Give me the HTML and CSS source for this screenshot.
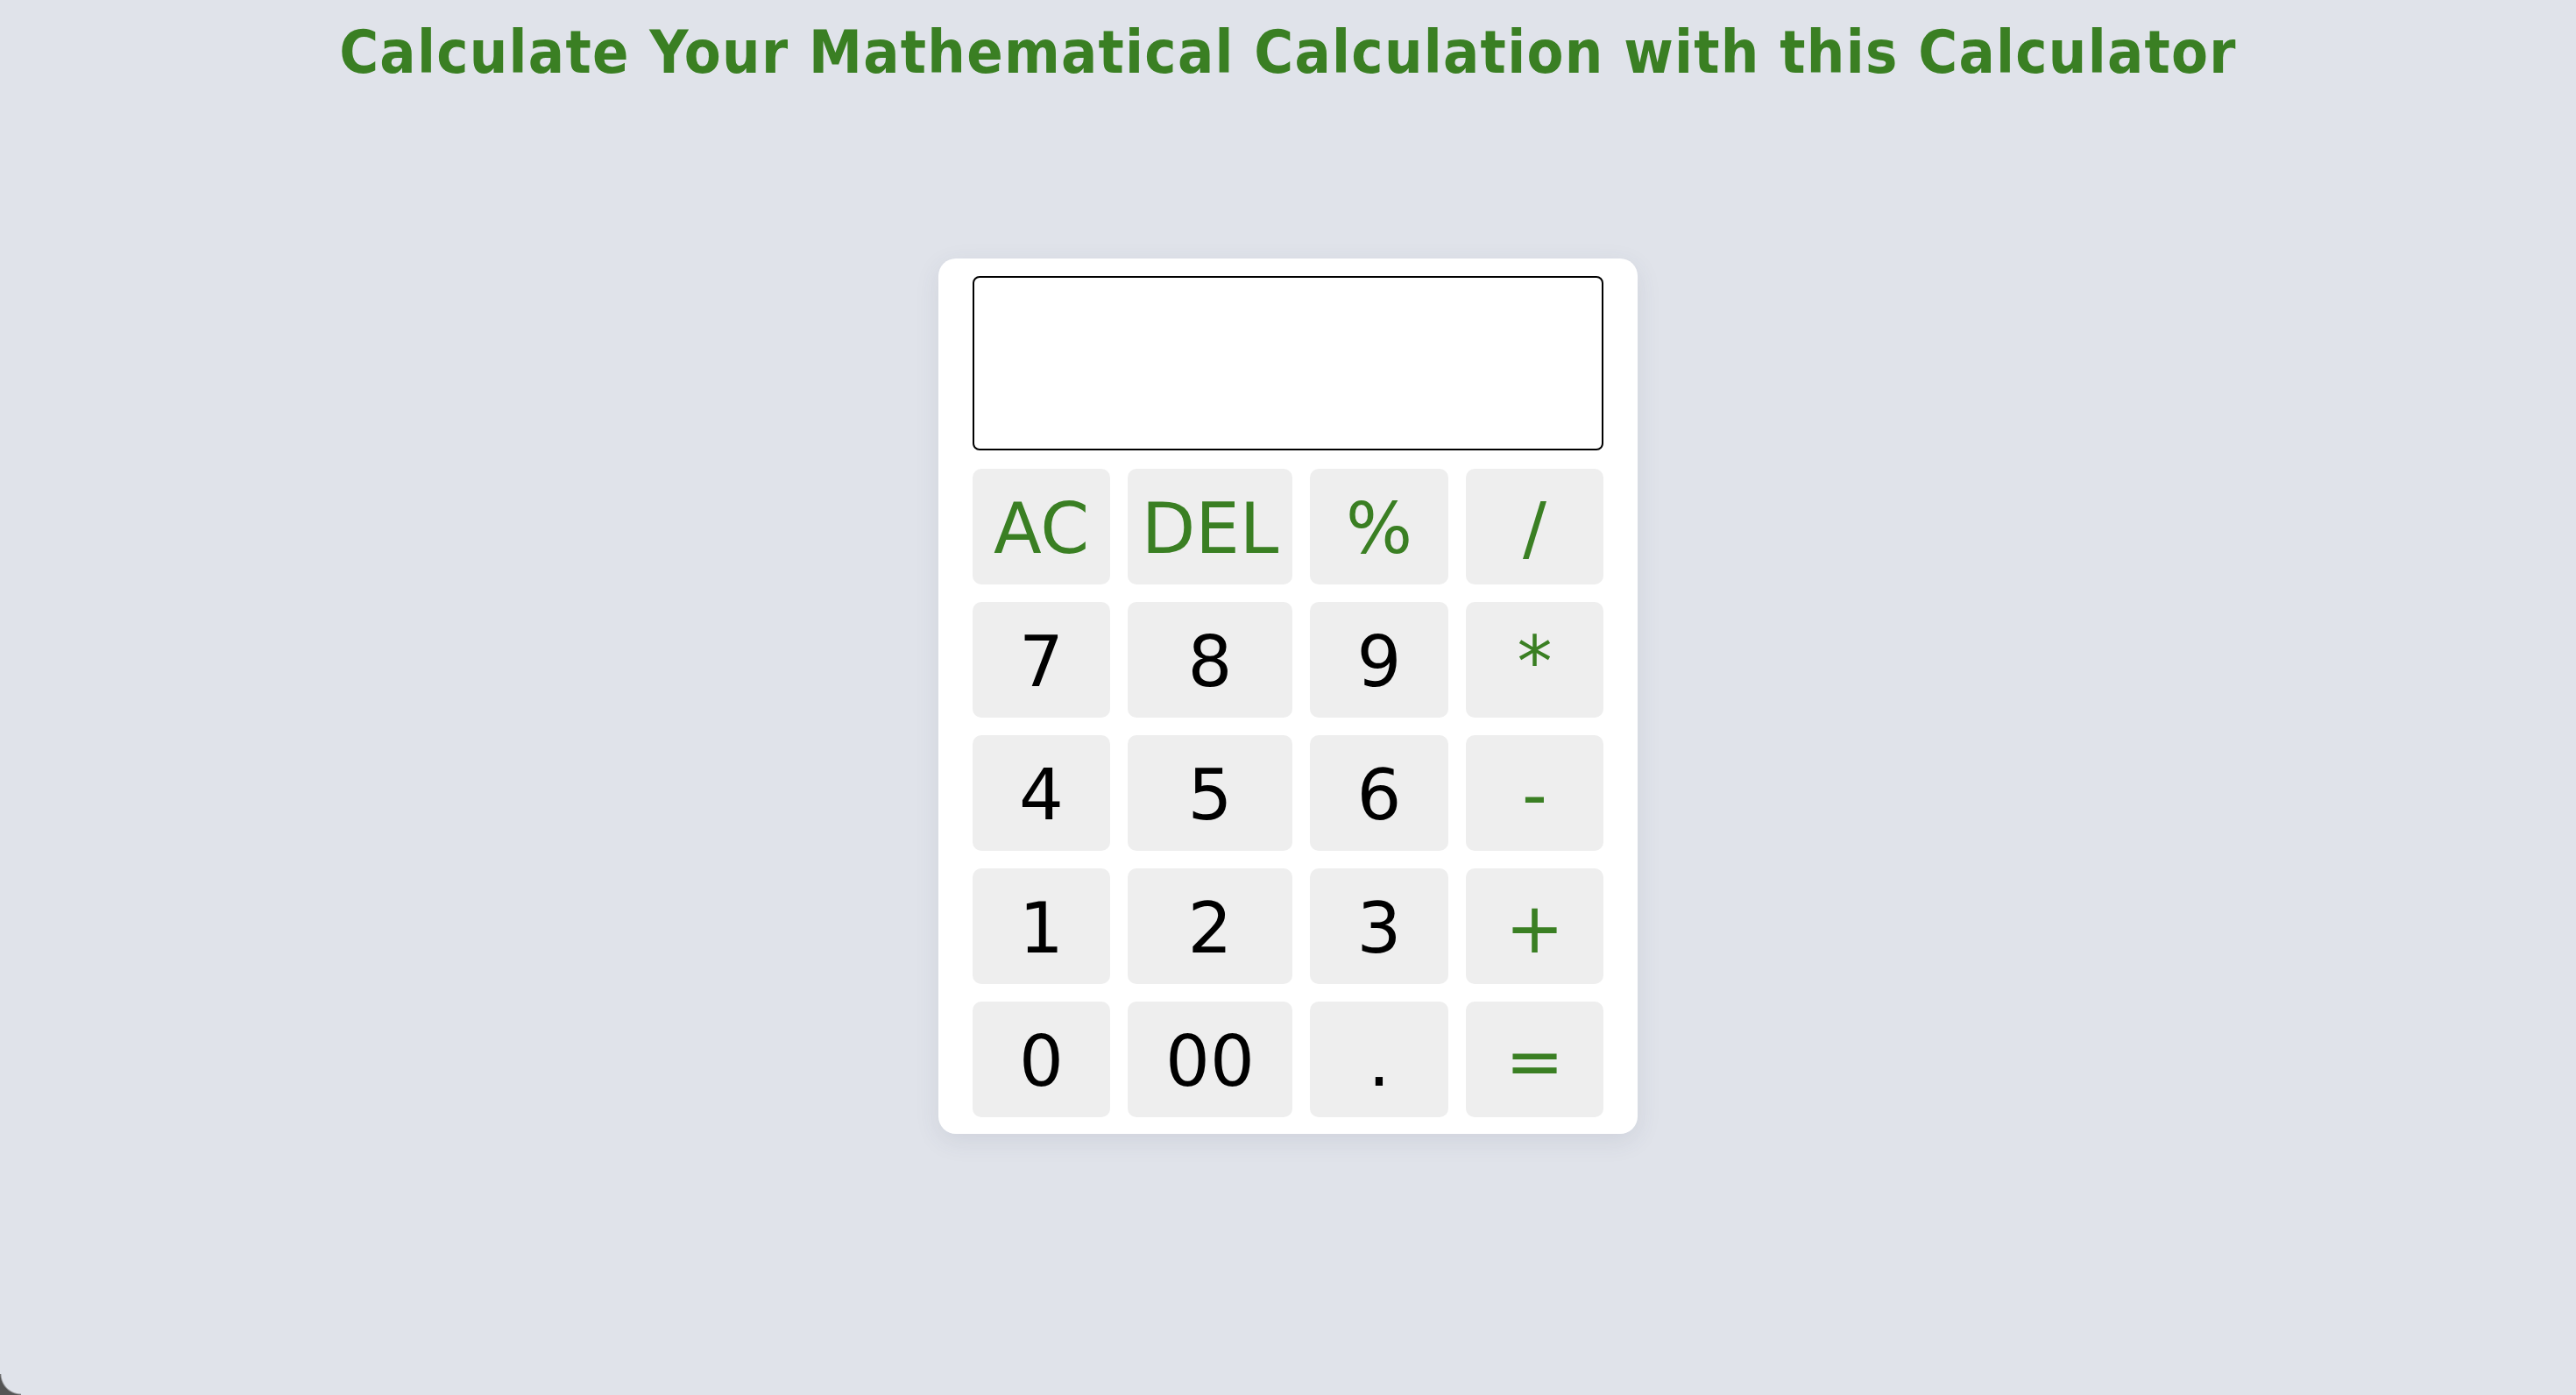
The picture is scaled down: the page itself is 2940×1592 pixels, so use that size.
FILE: index.html
```html
<!DOCTYPE html>
<html lang="en">
<head>
<meta charset="utf-8">
<title>Calculator</title>
<link rel="stylesheet" href="styles.css">
</head>
<body>
<h1 class="title">Calculate Your Mathematical Calculation with this Calculator</h1>
<div class="calculator">
  <input class="display" type="text" value="">
  <div class="keys">
    <button class="key op">AC</button>
    <button class="key op">DEL</button>
    <button class="key op">%</button>
    <button class="key op">/</button>
    <button class="key">7</button>
    <button class="key">8</button>
    <button class="key">9</button>
    <button class="key op">*</button>
    <button class="key">4</button>
    <button class="key">5</button>
    <button class="key">6</button>
    <button class="key op">-</button>
    <button class="key">1</button>
    <button class="key">2</button>
    <button class="key">3</button>
    <button class="key op">+</button>
    <button class="key">0</button>
    <button class="key">00</button>
    <button class="key">.</button>
    <button class="key op">=</button>
  </div>
</div>
<div class="corner"></div>
</body>
</html>
```
FILE: styles.css
```css
html, body {
  margin: 0;
  padding: 0;
}
body {
  background: #e0e3ea;
  min-height: 1592px;
  display: flex;
  flex-direction: column;
  align-items: center;
  font-family: "DejaVu Sans", Verdana, sans-serif;
}
.title {
  margin: 20px 0 0;
  font-family: "DejaVu Sans Condensed", "DejaVu Sans", sans-serif;
  font-stretch: condensed;
  font-size: 68px;
  font-weight: bold;
  letter-spacing: 1.3px;
  line-height: normal;
  color: #3a7f23;
  text-align: center;
  white-space: nowrap;
}
.calculator {
  margin-top: 196px;
  width: 798px;
  box-sizing: border-box;
  padding: 20px 39px 19px;
  background: #fff;
  border-radius: 20px;
  box-shadow: 0 8px 28px rgba(60, 70, 100, 0.10);
}
.display {
  display: block;
  box-sizing: border-box;
  width: 720px;
  height: 199px;
  margin: 0 0 21px;
  border: 2px solid #000;
  border-radius: 8px;
  background: #fff;
  outline: none;
  font-family: "DejaVu Sans", Verdana, sans-serif;
  font-size: 60px;
  text-align: right;
  padding: 0 20px;
}
.keys {
  display: grid;
  grid-template-columns: 157px 188px 158px 157px;
  grid-auto-rows: 132px;
  gap: 20px;
}
.key {
  margin: 0;
  padding: 6px 0 0;
  border: none;
  border-radius: 10px;
  background: #eeeeee;
  font-family: "DejaVu Sans", Verdana, sans-serif;
  font-size: 80px;
  line-height: 1;
  color: #000;
  display: flex;
  align-items: center;
  justify-content: center;
}
.key.op {
  color: #3a7f23;
}
.corner {
  position: fixed;
  left: 0;
  bottom: 0;
  width: 24px;
  height: 24px;
  background: radial-gradient(circle at 24px 0, transparent 22px, #555 24px);
}
```
